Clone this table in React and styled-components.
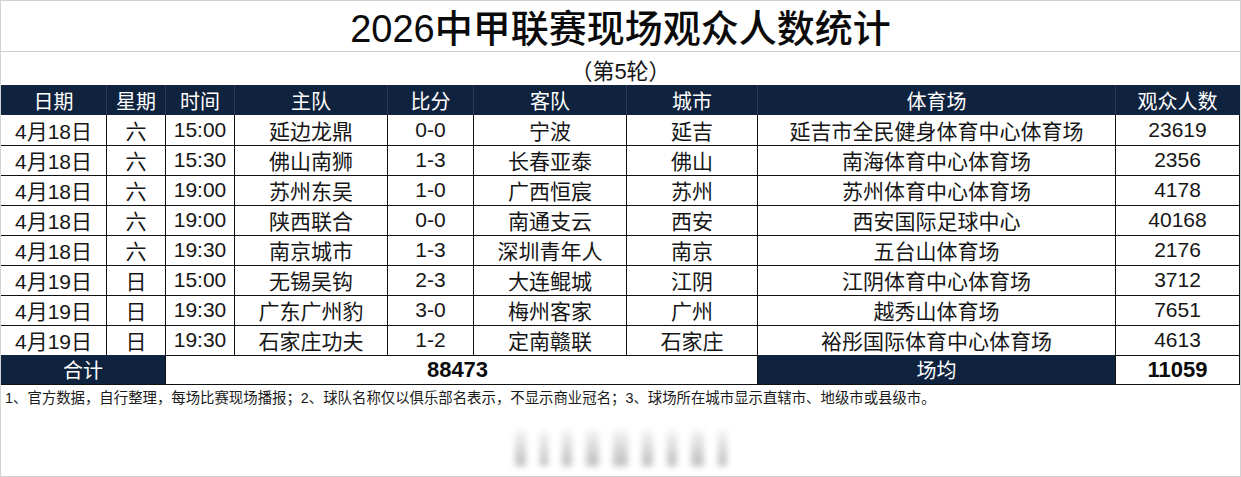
import React from 'react';
import styled, { createGlobalStyle } from 'styled-components';

const GlobalStyle = createGlobalStyle`
  html, body {
    margin: 0;
    padding: 0;
    background: #ffffff;
  }
  body {
    font-family: 'Liberation Sans', 'Noto Sans CJK SC', sans-serif;
  }
`;

const COLS = '106px 59px 69px 153px 86px 153px 131px 358px 1fr';
const NAVY = '#0f223e';

const Sheet = styled.div`
  width: 1241px;
  height: 477px;
  box-sizing: border-box;
  border: 1px solid #d2d2d2;
  display: flex;
  flex-direction: column;
  overflow: hidden;
  color: #161616;
`;

const Title = styled.div`
  height: 51px;
  border-bottom: 1px solid #d0d0d0;
  display: flex;
  align-items: center;
  justify-content: center;
  font-size: 38px;
  font-weight: 500;
  color: #0a0a0a;
  padding-bottom: 2px;
  box-sizing: border-box;
`;

const SubTitle = styled.div`
  height: 33px;
  display: flex;
  align-items: center;
  justify-content: center;
  font-size: 22px;
  padding-top: 1px;
  box-sizing: border-box;
`;

const Row = styled.div`
  display: grid;
  grid-template-columns: ${COLS};
  height: 30px;
`;

const HeadCell = styled.div`
  background: ${NAVY};
  color: #ffffff;
  font-size: 20px;
  display: flex;
  align-items: center;
  justify-content: center;
  box-sizing: border-box;
  border-right: 1px solid ${(p) => (p.$last ? NAVY : '#2b3a52')};
`;

const Cell = styled.div`
  display: flex;
  align-items: center;
  justify-content: center;
  font-size: 21px;
  box-sizing: border-box;
  border-right: 1px solid #111;
  border-bottom: 1px solid #111;
  white-space: nowrap;
`;

const TotalLabel = styled(Cell)`
  grid-column: ${(p) => p.$span};
  background: ${NAVY};
  color: #ffffff;
  font-size: 20px;
`;

const TotalValue = styled(Cell)`
  grid-column: ${(p) => p.$span};
  font-weight: 700;
  font-size: 22px;
  color: #0a0a0a;
  padding-right: ${(p) => p.$shift || 0}px;
`;

const Note = styled.div`
  height: 22px;
  display: flex;
  align-items: center;
  padding-left: 4px;
  font-size: 14.4px;
  color: #1a1a1a;
  white-space: nowrap;
`;

const Watermark = styled.div`
  margin: 23px auto 0;
  width: 212px;
  height: 36px;
  display: flex;
  align-items: stretch;
  gap: 14px;
  filter: blur(3px);
  opacity: 0.55;
`;

const Blob = styled.div`
  width: ${(p) => p.$w}px;
  background: linear-gradient(180deg, rgba(160,160,160,0.2), rgba(120,120,120,0.9));
  border-radius: 2px;
`;

const headers = ['日期', '星期', '时间', '主队', '比分', '客队', '城市', '体育场', '观众人数'];

const matches = [
  ['4月18日', '六', '15:00', '延边龙鼎', '0-0', '宁波', '延吉', '延吉市全民健身体育中心体育场', '23619'],
  ['4月18日', '六', '15:30', '佛山南狮', '1-3', '长春亚泰', '佛山', '南海体育中心体育场', '2356'],
  ['4月18日', '六', '19:00', '苏州东吴', '1-0', '广西恒宸', '苏州', '苏州体育中心体育场', '4178'],
  ['4月18日', '六', '19:00', '陕西联合', '0-0', '南通支云', '西安', '西安国际足球中心', '40168'],
  ['4月18日', '六', '19:30', '南京城市', '1-3', '深圳青年人', '南京', '五台山体育场', '2176'],
  ['4月19日', '日', '15:00', '无锡吴钩', '2-3', '大连鲲城', '江阴', '江阴体育中心体育场', '3712'],
  ['4月19日', '日', '19:30', '广东广州豹', '3-0', '梅州客家', '广州', '越秀山体育场', '7651'],
  ['4月19日', '日', '19:30', '石家庄功夫', '1-2', '定南赣联', '石家庄', '裕彤国际体育中心体育场', '4613'],
];

const blobs = [14, 10, 12, 16, 18, 14, 12, 16, 10];

export default function App() {
  return (
    <>
      <GlobalStyle />
      <Sheet>
        <Title>2026中甲联赛现场观众人数统计</Title>
        <SubTitle>（第5轮）</SubTitle>
        <Row>
          {headers.map((h, i) => (
            <HeadCell key={h} $last={i === headers.length - 1}>
              {h}
            </HeadCell>
          ))}
        </Row>
        {matches.map((m, r) => (
          <Row key={r}>
            {m.map((v, c) => (
              <Cell key={c}>{v}</Cell>
            ))}
          </Row>
        ))}
        <Row>
          <TotalLabel $span="1 / 3">合计</TotalLabel>
          <TotalValue $span="3 / 8" $shift={8}>88473</TotalValue>
          <TotalLabel $span="8 / 9">场均</TotalLabel>
          <TotalValue $span="9 / 10">11059</TotalValue>
        </Row>
        <Note>
          1、官方数据，自行整理，每场比赛现场播报；2、球队名称仅以俱乐部名表示，不显示商业冠名；3、球场所在城市显示直辖市、地级市或县级市。
        </Note>
        <Watermark>
          {blobs.map((w, i) => (
            <Blob key={i} $w={w} />
          ))}
        </Watermark>
      </Sheet>
    </>
  );
}
